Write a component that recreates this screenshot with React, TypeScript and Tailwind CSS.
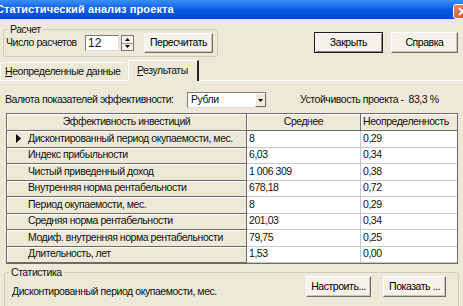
import React from 'react';
import clsx from 'clsx';

const rows = [
  ['Дисконтированный период окупаемости, мес.', '8', '0,29'],
  ['Индекс прибыльности', '6,03', '0,34'],
  ['Чистый приведенный доход', '1 006 309', '0,38'],
  ['Внутренняя норма рентабельности', '678,18', '0,72'],
  ['Период окупаемости, мес.', '8', '0,29'],
  ['Средняя норма рентабельности', '201,03', '0,34'],
  ['Модиф. внутренняя норма рентабельности', '79,75', '0,25'],
  ['Длительность, лет', '1,53', '0,00'],
];

function Button({
  children,
  className,
  isDefault,
}: {
  children: React.ReactNode;
  className?: string;
  isDefault?: boolean;
}) {
  return (
    <div
      className={clsx(
        'flex shrink-0 items-center justify-center bg-[#f4f2ea] text-black',
        isDefault
          ? 'border border-[#1c1c1c] shadow-[inset_1px_1px_0_#ffffff,inset_-1px_-1px_0_#8a887c]'
          : 'border border-t-white border-l-white border-r-[#6e6c62] border-b-[#6e6c62] shadow-[inset_-1px_-1px_0_#c9c6b6]',
        className,
      )}
    >
      {children}
    </div>
  );
}

function GroupBox({
  label,
  className,
  children,
}: {
  label: string;
  className?: string;
  children: React.ReactNode;
}) {
  return (
    <div className={clsx('relative rounded-[3px] border border-[#cfcdbf]', className)}>
      <span className="absolute left-[4px] top-[-8px] bg-[#ece9d8] px-[2px] leading-[14px]">
        {label}
      </span>
      {children}
    </div>
  );
}

export default function App() {
  return (
    <div className="h-[306px] w-[463px] overflow-hidden whitespace-nowrap bg-[#ece9d8] font-['Liberation_Sans',Arial,sans-serif] text-[10.5px] tracking-[-0.45px] text-[#111]">
      {/* title bar */}
      <div className="flex h-[19px] items-center justify-between bg-gradient-to-b from-[#3d8ef7] via-[#0a5ae6] to-[#0049d2]">
        <span className="ml-[-4px] text-[11px] font-bold tracking-[0.1px] text-white">
          Статистический анализ проекта
        </span>
        <div className="mr-[-8px] mt-[4px] flex h-[15px] w-[18px] items-center justify-center rounded-[3px] border border-white bg-gradient-to-br from-[#e98a6f] to-[#c8401c]">
          <svg width="9" height="9" viewBox="0 0 9 9">
            <path d="M1 1 L8 8 M8 1 L1 8" stroke="#fff" strokeWidth="2" />
          </svg>
        </div>
      </div>

      {/* top controls */}
      <div className="flex items-start">
        <GroupBox label="Расчет" className="ml-[3px] mt-[10px] flex h-[28px] w-[215px] items-center">
          <span className="ml-[2px] w-[79px]">Число расчетов</span>
          <div className="flex h-[16px] w-[34px] items-center border border-t-[#7a7a7a] border-l-[#7a7a7a] border-b-[#dcdcdc] border-r-[#dcdcdc] bg-white pl-[2px] text-[12px] tracking-normal">
            12
          </div>
          <div className="ml-[2px] flex h-[16px] w-[13px] flex-col border border-[#7a7a7a] bg-[#f4f2ea]">
            <div className="flex flex-1 items-center justify-center border-b border-[#9a988c]">
              <svg width="5" height="3" viewBox="0 0 5 3">
                <path d="M0 3 L2.5 0 L5 3 Z" fill="#000" />
              </svg>
            </div>
            <div className="flex flex-1 items-center justify-center">
              <svg width="5" height="3" viewBox="0 0 5 3">
                <path d="M0 0 L2.5 3 L5 0 Z" fill="#000" />
              </svg>
            </div>
          </div>
          <Button className="ml-[10px] h-[20px] w-[69px]">Пересчитать</Button>
        </GroupBox>
        <div className="ml-auto mr-[5px] mt-[13px] flex gap-[8px]">
          <Button isDefault className="h-[21px] w-[69px]">
            Закрыть
          </Button>
          <Button className="h-[21px] w-[67px]">Справка</Button>
        </div>
      </div>

      {/* tabs */}
      <div className="mt-[3px] flex h-[21px] items-end border-b border-white">
        <div className="flex h-[18px] w-[124px] items-center rounded-t-[2px] border-t border-l border-t-white border-l-white pl-[4px]">
          <span>
            <span className="underline">Н</span>еопределенные данные
          </span>
        </div>
        <div className="mb-[-1px] ml-[4px] flex h-[21px] w-[71px] items-center border-t border-l border-r-2 border-t-white border-l-white border-r-[#222] bg-[#ece9d8] pl-[8px]">
          <span>
            <span className="underline">Р</span>езультаты
          </span>
        </div>
      </div>

      {/* currency row */}
      <div className="mt-[11px] flex h-[16px] items-center">
        <span className="ml-[5px] w-[182px]">Валюта показателей эффективности:</span>
        <div className="flex h-[16px] w-[80px] items-center justify-between border border-t-[#7a7a7a] border-l-[#7a7a7a] border-b-[#dcdcdc] border-r-[#dcdcdc] bg-white">
          <span className="pl-[3px]">Рубли</span>
          <div className="flex h-full w-[11px] items-center justify-center border border-t-white border-l-white border-b-[#6e6c62] border-r-[#6e6c62] bg-[#ece9d8]">
            <svg width="5" height="3" viewBox="0 0 5 3">
              <path d="M0 0 L2.5 3 L5 0 Z" fill="#000" />
            </svg>
          </div>
        </div>
        <span className="ml-[33px]">Устойчивость проекта -&nbsp; 83,3 %</span>
      </div>

      {/* grid */}
      <div className="ml-[6px] mt-[5px] w-[452px] border border-[#6b6b6b] bg-[#ece9d8]">
        <div className="grid grid-cols-[240px_114px_96px]">
          <div className="flex h-[17px] items-center justify-center border-r border-b border-r-[#6b6b6b] border-b-[#6b6b6b] shadow-[inset_1px_1px_0_#ffffff]">
            Эффективность инвестиций
          </div>
          <div className="flex h-[17px] items-center justify-center border-r border-b border-r-[#6b6b6b] border-b-[#6b6b6b] shadow-[inset_1px_1px_0_#ffffff]">
            Среднее
          </div>
          <div className="flex h-[17px] items-center overflow-hidden border-b border-b-[#6b6b6b] pl-[2px] shadow-[inset_1px_1px_0_#ffffff]">
            Неопределенность
          </div>
          {rows.map((row, i) => (
            <React.Fragment key={row[0]}>
              <div className="flex h-[16.5px] items-center overflow-hidden border-r border-b border-r-[#6b6b6b] border-b-[#6b6b6b] shadow-[inset_1px_1px_0_#ffffff]">
                <span className="flex w-[21px] shrink-0 justify-center pl-[2px]">
                  {i === 0 && (
                    <svg width="5" height="9" viewBox="0 0 5 9">
                      <path d="M0 0 L5 4.5 L0 9 Z" fill="#000" />
                    </svg>
                  )}
                </span>
                {row[0]}
              </div>
              <div className="flex h-[16.5px] items-center border-r border-b border-[#c8c8c8] bg-white pl-[2px]">
                {row[1]}
              </div>
              <div className="flex h-[16.5px] items-center border-b border-[#c8c8c8] bg-white pl-[2px]">
                {row[2]}
              </div>
            </React.Fragment>
          ))}
        </div>
      </div>

      {/* statistics */}
      <GroupBox label="Статистика" className="ml-[4px] mr-[4px] mt-[8px] flex h-[40px] items-start">
        <span className="ml-[7px] mt-[11px]">Дисконтированный период окупаемости, мес.</span>
        <div className="ml-auto mr-[12px] mt-[3px] flex gap-[12px]">
          <Button className="h-[21px] w-[65px]">Настроить...</Button>
          <Button className="h-[21px] w-[63px]">Показать ...</Button>
        </div>
      </GroupBox>
    </div>
  );
}
